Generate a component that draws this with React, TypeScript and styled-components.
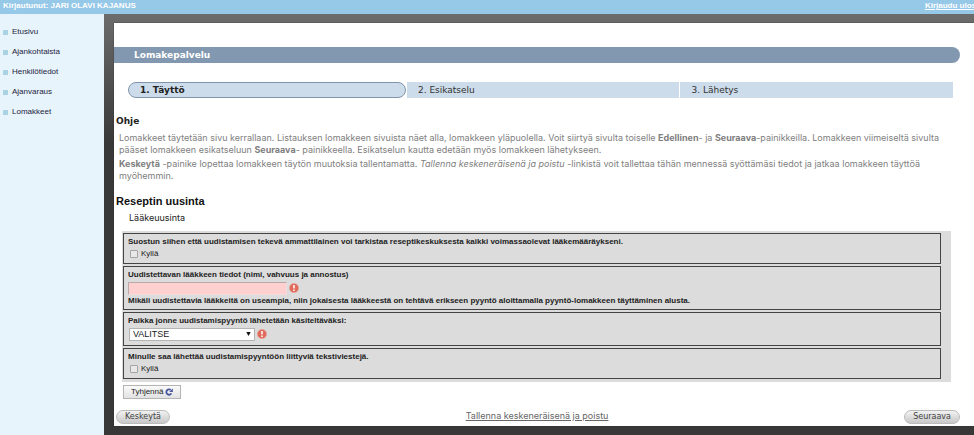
import React from "react";
import styled, { createGlobalStyle } from "styled-components";

const sans = '"Liberation Sans", Arial, sans-serif';
const wide = '"DejaVu Sans", Verdana, sans-serif';
const copy = 'Inter, Verdana, sans-serif';

const GlobalStyle = createGlobalStyle`
  *, *::before, *::after { box-sizing: border-box; }
  html, body, #root { height: 100%; }
  body { margin: 0; overflow: hidden; font: 8px/12px ${sans}; color: #222; }
  button, input, select { font: inherit; color: inherit; margin: 0; }
`;

const Page = styled.div`
  min-height: 100%;
  display: flex;
  flex-direction: column;
`;

const TopBar = styled.header`
  display: flex;
  justify-content: space-between;
  height: 14px;
  padding-left: 3px;
  background: #96c8e8;
  color: #fff;
  font-weight: bold;
  white-space: nowrap;
`;

const LogoutLink = styled.a`
  color: #fff;
  margin-right: -2px;
`;

const Body = styled.div`
  flex: 1;
  display: flex;
`;

const Sidebar = styled.nav`
  flex: 0 0 104px;
  background: #e8f4fc;
  padding: 8px 3px;
`;

const Menu = styled.ul`
  list-style: none;
  margin: 0;
  padding: 0;
`;

const MenuItem = styled.li`
  display: flex;
  align-items: center;
  gap: 4px;
  height: 20px;

  &::before {
    content: "";
    width: 5px;
    height: 5px;
    background: #a9d2e4;
  }
`;

const MenuLink = styled.a`
  color: #1c1c3c;
  text-decoration: none;
`;

const Backdrop = styled.div`
  flex: 1;
  min-width: 0;
  padding: 9px 0 9px 10px;
  background: linear-gradient(#6c6c6c, #383838 130px);
`;

const Sheet = styled.main`
  background: #fff;
  padding: 24px 0 2px;
  box-shadow: 0 0 1px #222;
`;

const TitleBar = styled.h1`
  margin: 0 14px 19px 0;
  padding-left: 20px;
  height: 16px;
  border-radius: 0 8px 8px 0;
  background: #8298b0;
  color: #fff;
  font: bold 9px/16px ${wide};
`;

const Steps = styled.ol`
  list-style: none;
  display: grid;
  grid-template-columns: 102fr 100fr 100fr;
  gap: 1px;
  margin: 0 21px 0 14px;
  padding: 0;
`;

const Step = styled.li<{ $active?: boolean }>`
  height: 16px;
  padding-left: 11px;
  background: #ccdcea;
  color: #333;
  font: ${(p) => (p.$active ? "bold" : "normal")} 9px/16px ${wide};
  ${(p) =>
    p.$active &&
    `
    border: 1px solid #8095ad;
    border-radius: 8px;
    line-height: 14px;
    color: #222;
  `}
`;

const Help = styled.section`
  padding: 15px 24px 0 2px;
`;

const HelpTitle = styled.h2`
  margin: 0 0 3px;
  font: bold 9px/16px ${wide};
`;

const HelpText = styled.p`
  margin: 0 0 2px;
  padding-left: 3px;
  color: #808080;
  font: 9px/12px ${copy};
`;

const FormTitle = styled.h2`
  margin: 10px 0 0 2px;
  font: bold 11px/18px ${sans};
  color: #111;
`;

const FormSubtitle = styled.p`
  margin: 0 0 5px 15px;
  font: 9px/16px ${copy};
`;

const Form = styled.form`
  margin: 0;
`;

const Fields = styled.div`
  display: grid;
  gap: 2px;
  margin: 0 23px 0 8px;
  padding: 2px 10px 3px 1px;
  background: #dcdcdc;
`;

const FieldBox = styled.fieldset`
  min-width: 0;
  margin: 0;
  padding: 2px 4px;
  border: 1px solid #444;
`;

const FieldLabel = styled.label`
  display: block;
  font-weight: bold;
`;

const Note = styled.p`
  margin: 0;
  font-weight: bold;
`;

const CheckRow = styled.label`
  display: flex;
  align-items: center;
  gap: 3px;
  height: 12px;
  margin-bottom: 1px;
  padding-left: 2px;
`;

const CheckBox = styled.input`
  appearance: none;
  width: 8px;
  height: 8px;
  border: 1px solid #a4a4a4;
  border-radius: 1px;
  background: #e8e8e8;
`;

const ControlRow = styled.div<{ $last?: boolean }>`
  display: flex;
  align-items: center;
  gap: 2px;
  height: 14px;
  margin-bottom: ${(p) => (p.$last ? 2 : 0)}px;
`;

const TextInput = styled.input`
  width: 159px;
  height: 13px;
  padding: 0 2px;
  border: 1px solid #b9a9a9;
  border-right-color: #f4dcdc;
  border-bottom-color: #f4dcdc;
  background: #ffd0d0;
`;

const SelectWrap = styled.div`
  position: relative;
  margin-left: 1px;
`;

const Select = styled.select`
  appearance: none;
  display: block;
  width: 126px;
  height: 13px;
  padding: 0 3px;
  border: 1px solid #b4b4b4;
  background: #fff;
  font-size: 9px;
  line-height: 11px;
`;

const Arrow = styled.svg`
  position: absolute;
  right: 4px;
  top: 4px;
  pointer-events: none;
`;

const ResetButton = styled.button`
  display: flex;
  align-items: center;
  gap: 2px;
  height: 14px;
  margin: 3px 0 11px 9px;
  padding: 0 7px;
  border: 1px solid #b4b4b4;
  background: linear-gradient(#fafafa, #e2e2e2);
`;

const Footer = styled.div`
  display: flex;
  justify-content: space-between;
  padding: 0 14px 0 2px;
`;

const PillButton = styled.button`
  height: 14px;
  padding: 0 8px;
  border: 1px solid #bcbcbc;
  border-radius: 7px;
  background: linear-gradient(#f2f2f2, #c8c8c8);
  color: #444;
  font: 8px/12px ${wide};
`;

const SaveLink = styled.a`
  color: #666;
  font: 9px/12px ${copy};
`;

const Required = () => (
  <svg width="10" height="10" viewBox="0 0 10 10" role="img" aria-label="Pakollinen">
    <circle cx="5" cy="5" r="4.6" fill="#e06a5c" stroke="#eda094" strokeWidth="0.6" />
    <path d="M5 2v3.6M5 6.6v1.3" stroke="#fff" strokeWidth="1.5" />
  </svg>
);

const RefreshIcon = () => (
  <svg width="8" height="8" viewBox="0 0 8 8" aria-hidden="true">
    <path d="M6.4 5.4A2.7 2.7 0 1 1 5.7 1.9" fill="none" stroke="#46539c" strokeWidth="1.8" />
    <path d="M7.8 0.4V4H4.2z" fill="#46539c" />
  </svg>
);

const menu = ["Etusivu", "Ajankohtaista", "Henkilötiedot", "Ajanvaraus", "Lomakkeet"];

export default function App() {
  return (
    <>
      <GlobalStyle />
      <Page>
        <TopBar>
          <span>Kirjautunut: JARI OLAVI KAJANUS</span>
          <LogoutLink href="#">Kirjaudu ulos</LogoutLink>
        </TopBar>
        <Body>
          <Sidebar>
            <Menu>
              {menu.map((name) => (
                <MenuItem key={name}>
                  <MenuLink href="#">{name}</MenuLink>
                </MenuItem>
              ))}
            </Menu>
          </Sidebar>
          <Backdrop>
            <Sheet>
              <TitleBar>Lomakepalvelu</TitleBar>
              <Steps>
                <Step $active>1. Täyttö</Step>
                <Step>2. Esikatselu</Step>
                <Step>3. Lähetys</Step>
              </Steps>
              <Help>
                <HelpTitle>Ohje</HelpTitle>
                <HelpText>
                  Lomakkeet täytetään sivu kerrallaan. Listauksen lomakkeen sivuista näet alla, lomakkeen yläpuolella.
                  Voit siirtyä sivulta toiselle <b>Edellinen</b>- ja <b>Seuraava</b>-painikkeilla. Lomakkeen viimeiseltä
                  sivulta pääset lomakkeen esikatseluun <b>Seuraava</b>- painikkeella. Esikatselun kautta edetään myös
                  lomakkeen lähetykseen.
                </HelpText>
                <HelpText>
                  <b>Keskeytä</b> -painike lopettaa lomakkeen täytön muutoksia tallentamatta.{" "}
                  <i>Tallenna keskeneräisenä ja poistu</i> -linkistä voit tallettaa tähän mennessä syöttämäsi tiedot ja
                  jatkaa lomakkeen täyttöä myöhemmin.
                </HelpText>
              </Help>
              <FormTitle>Reseptin uusinta</FormTitle>
              <FormSubtitle>Lääkeuusinta</FormSubtitle>
              <Form onSubmit={(e) => e.preventDefault()}>
                <Fields>
                  <FieldBox aria-labelledby="consent">
                    <FieldLabel as="div" id="consent">
                      Suostun siihen että uudistamisen tekevä ammattilainen voi tarkistaa reseptikeskuksesta kaikki
                      voimassaolevat lääkemääräykseni.
                    </FieldLabel>
                    <CheckRow>
                      <CheckBox type="checkbox" />
                      Kyllä
                    </CheckRow>
                  </FieldBox>
                  <FieldBox>
                    <FieldLabel htmlFor="medicine">Uudistettavan lääkkeen tiedot (nimi, vahvuus ja annostus)</FieldLabel>
                    <ControlRow>
                      <TextInput id="medicine" type="text" />
                      <Required />
                    </ControlRow>
                    <Note>
                      Mikäli uudistettavia lääkkeitä on useampia, niin jokaisesta lääkkeestä on tehtävä erikseen pyyntö
                      aloittamalla pyyntö-lomakkeen täyttäminen alusta.
                    </Note>
                  </FieldBox>
                  <FieldBox>
                    <FieldLabel htmlFor="place">Paikka jonne uudistamispyyntö lähetetään käsiteltäväksi:</FieldLabel>
                    <ControlRow $last>
                      <SelectWrap>
                        <Select id="place">
                          <option>VALITSE</option>
                        </Select>
                        <Arrow width="5" height="4" viewBox="0 0 5 4" aria-hidden="true">
                          <path d="M0.3 0h4.4L2.5 4z" fill="#111" />
                        </Arrow>
                      </SelectWrap>
                      <Required />
                    </ControlRow>
                  </FieldBox>
                  <FieldBox aria-labelledby="messages">
                    <FieldLabel as="div" id="messages">
                      Minulle saa lähettää uudistamispyyntöön liittyviä tekstiviestejä.
                    </FieldLabel>
                    <CheckRow>
                      <CheckBox type="checkbox" />
                      Kyllä
                    </CheckRow>
                  </FieldBox>
                </Fields>
                <ResetButton type="reset">
                  Tyhjennä <RefreshIcon />
                </ResetButton>
                <Footer>
                  <PillButton type="button">Keskeytä</PillButton>
                  <SaveLink href="#">Tallenna keskeneräisenä ja poistu</SaveLink>
                  <PillButton type="submit">Seuraava</PillButton>
                </Footer>
              </Form>
            </Sheet>
          </Backdrop>
        </Body>
      </Page>
    </>
  );
}
